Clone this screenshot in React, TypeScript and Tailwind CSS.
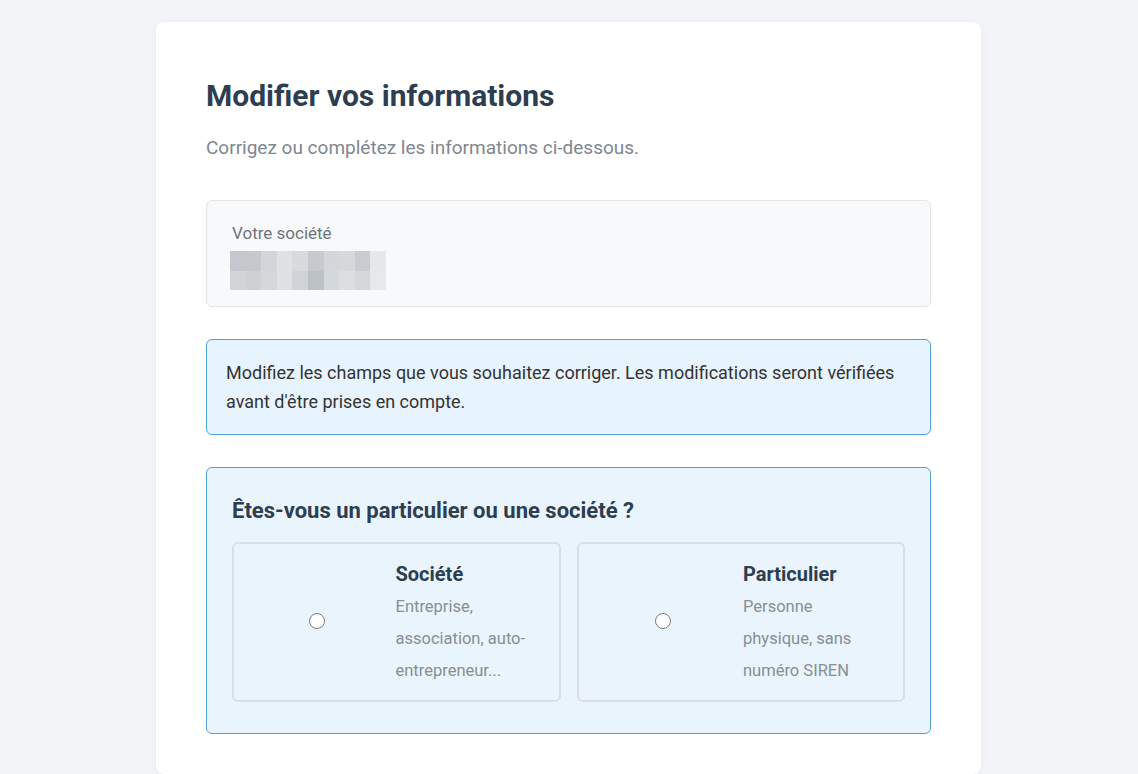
const pixels = [
  ['bg-[#c4c8cc]', 'bg-[#c5c9cd]', 'bg-[#d2d6d9]', 'bg-[#dfe2e5]', 'bg-[#d8dbde]', 'bg-[#c6cacf]', 'bg-[#d4d7da]', 'bg-[#d6d9dc]', 'bg-[#c8ccd1]', 'bg-[#e5e7e8]'],
  ['bg-[#d2d5d8]', 'bg-[#cdd1d4]', 'bg-[#d5d8db]', 'bg-[#dfe2e4]', 'bg-[#d0d3d7]', 'bg-[#bcc1c6]', 'bg-[#d5d8db]', 'bg-[#dcdfe1]', 'bg-[#d5d8db]', 'bg-[#e6e8e9]'],
];

function ChoiceCard({ title, desc, textWidth }: { title: string; desc: string; textWidth: string }) {
  return (
    <label className="flex-1 flex items-center border-2 border-[#dcdfe2] rounded-md pt-[18px] pb-[13px] pl-[18px] pr-[18px] cursor-pointer">
      <div className="flex-1 flex justify-center mb-[7px]">
        <input
          type="radio"
          name="type"
          className="appearance-none w-4 h-4 rounded-full border border-[#7a7d80] bg-white"
        />
      </div>
      <div className={`${textWidth} ml-[13px]`}>
        <div className="text-[20px] leading-[24px] font-bold text-[#2c3e50] mb-[5px]">{title}</div>
        <div className="text-[16.5px] leading-[32px] text-[#868e96]">{desc}</div>
      </div>
    </label>
  );
}

export default function App() {
  return (
    <div
      className="min-h-screen bg-[#f3f4f7] flex justify-center pt-[22px] pr-[1px]"
      style={{ fontFamily: 'Roboto, "Liberation Sans", sans-serif' }}
    >
      <div className="w-[825px] bg-white rounded-lg shadow-[0_1px_6px_rgba(0,0,0,0.06)] px-[50px] pt-[56px] pb-10">
        <h1 className="text-[30px] leading-[36px] font-bold text-[#2c3e50]">Modifier vos informations</h1>
        <p className="mt-[20px] text-[19px] leading-[28px] text-[#7f878f]">
          Corrigez ou complétez les informations ci-dessous.
        </p>

        <div className="mt-[38px] bg-[#f8f9fa] border border-[#e2e5e8] rounded-md px-[25px] pt-[20px] pb-[16px]">
          <div className="text-[17px] leading-[24px] text-[#6c757d]">Votre société</div>
          <div className="mt-[6px] w-[156px] h-[39px] grid grid-rows-2 grid-cols-10 -ml-[2px]">
            {pixels.flat().map((c, i) => (
              <div key={i} className={c} />
            ))}
          </div>
        </div>

        <div className="mt-[32px] bg-[#e8f4fd] border border-[#4fa3d6] rounded-md px-[19px] py-[18px]">
          <p className="text-[18px] leading-[29px] text-[#333333]">
            Modifiez les champs que vous souhaitez corriger. Les modifications seront vérifiées avant d'être prises en
            compte.
          </p>
        </div>

        <div className="mt-[32px] bg-[#eaf4fc] border border-[#4fa3d6] rounded-md px-[25px] pt-[29px] pb-[31px]">
          <h2 className="text-[22px] leading-[28px] font-bold text-[#2c3e50]">
            Êtes-vous un particulier ou une société ?
          </h2>
          <div className="mt-[17px] flex gap-[16px]">
            <ChoiceCard title="Société" desc="Entreprise, association, auto-entrepreneur..." textWidth="w-[145px]" />
            <ChoiceCard title="Particulier" desc="Personne physique, sans numéro SIREN" textWidth="w-[142px]" />
          </div>
        </div>
      </div>
    </div>
  );
}
